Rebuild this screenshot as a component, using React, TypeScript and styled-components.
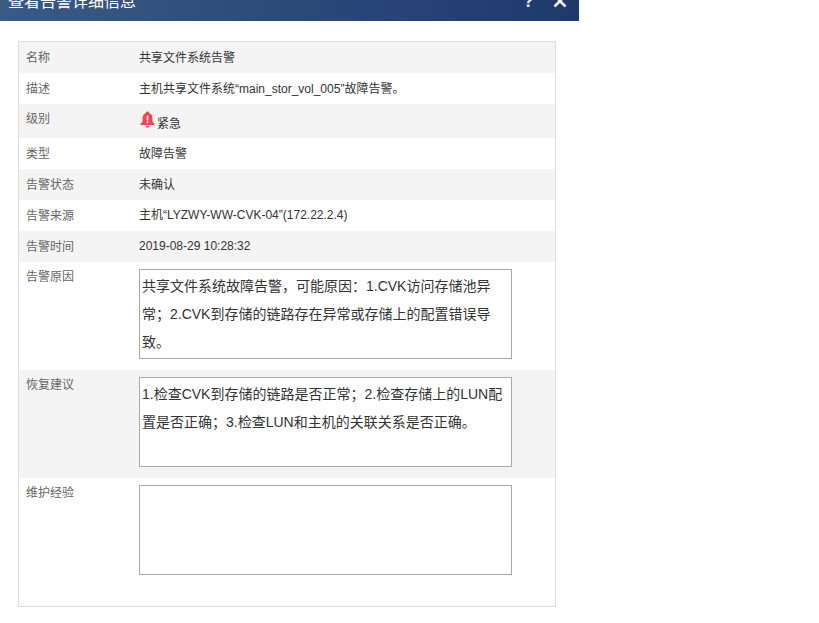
import React from 'react';
import styled, { createGlobalStyle } from 'styled-components';

const GlobalStyle = createGlobalStyle`
  html, body {
    margin: 0;
    padding: 0;
    background: #fff;
    overflow: hidden;
  }
  body {
    font-family: "Liberation Sans", "Noto Sans CJK SC", sans-serif;
    font-size: 12px;
  }
`;

const Dialog = styled.div`
  width: 579px;
  margin-top: -19px;
`;

const TitleBar = styled.header`
  height: 40px;
  display: flex;
  justify-content: space-between;
  align-items: center;
  padding: 0 12px 0 8px;
  box-sizing: border-box;
  background: linear-gradient(to right, #3a5a85, #1e3a6b);
  color: #fff;
`;

const Title = styled.h2`
  margin: 0 0 3px;
  font-size: 16px;
  font-weight: normal;
`;

const TitleTools = styled.div`
  display: flex;
  align-items: center;
  gap: 19px;
`;

const HelpMark = styled.span`
  font-size: 18px;
  font-weight: bold;
  color: #dfe4ec;
`;

const Panel = styled.div`
  margin: 20px 23px 0 18px;
  border: 1px solid #ddd;
  height: 566px;
  box-sizing: border-box;
`;

const Row = styled.div<{ $h: number; $shade?: boolean }>`
  display: flex;
  height: ${(p) => p.$h}px;
  box-sizing: border-box;
  background: ${(p) => (p.$shade ? '#f4f4f4' : '#fff')};
`;

const Label = styled.div<{ $top?: number }>`
  width: 120px;
  padding: ${(p) => p.$top ?? 8}px 0 0 7px;
  box-sizing: border-box;
  line-height: 17px;
  color: #666;
`;

const Value = styled.div<{ $top?: number }>`
  padding-top: ${(p) => p.$top ?? 8}px;
  line-height: 17px;
  color: #333;
`;

const LevelValue = styled(Value)`
  display: flex;
  align-items: flex-start;
  gap: 1px;
`;

const LevelText = styled.span`
  margin-top: 5px;
`;

const TextBox = styled.div`
  width: 373px;
  height: 90px;
  margin-top: 7px;
  padding: 2px 2px;
  box-sizing: border-box;
  border: 1px solid #a9a9a9;
  background: #fff;
  font-size: 14px;
  line-height: 28px;
  color: #333;
`;

const BellIcon = () => (
  <svg width="17" height="17" viewBox="0 0 17 17">
    <path
      fill="#f4444f"
      d="M8.5 0.5c-1 0-1.6.7-1.6 1.5C4.6 2.8 3.6 4.8 3.6 7v3.2L1.5 13v1h14v-1l-2.1-2.8V7c0-2.2-1-4.2-3.3-5 0-.8-.6-1.5-1.6-1.5zM6.5 15c.2 1 1 1.5 2 1.5s1.8-.5 2-1.5z"
    />
    <rect x="7.7" y="4.5" width="1.6" height="5" fill="#fff" />
    <rect x="7.7" y="10.4" width="1.6" height="1.6" fill="#fff" />
  </svg>
);

const CloseIcon = () => (
  <svg width="14" height="14" viewBox="0 0 14 14">
    <path d="M1.5 1.5l11 11M12.5 1.5l-11 11" stroke="#eef1f5" strokeWidth="2.6" fill="none" />
  </svg>
);

const simpleRows = [
  { label: '类型', value: '故障告警', shade: false, top: 8 },
  { label: '告警状态', value: '未确认', shade: true, top: 8 },
  { label: '告警来源', value: '主机“LYZWY-WW-CVK-04”(172.22.2.4)', shade: false, top: 7 },
  { label: '告警时间', value: '2019-08-29 10:28:32', shade: true, top: 7 },
];

const App: React.FC = () => {
  return (
    <>
      <GlobalStyle />
      <Dialog>
        <TitleBar>
          <Title>查看告警详细信息</Title>
          <TitleTools>
            <HelpMark>?</HelpMark>
            <CloseIcon />
          </TitleTools>
        </TitleBar>
        <Panel>
          <Row $h={31} $shade>
            <Label>名称</Label>
            <Value>共享文件系统告警</Value>
          </Row>
          <Row $h={31}>
            <Label>描述</Label>
            <Value>主机共享文件系统“main_stor_vol_005”故障告警。</Value>
          </Row>
          <Row $h={34} $shade>
            <Label $top={7}>级别</Label>
            <LevelValue $top={7}>
              <BellIcon />
              <LevelText>紧急</LevelText>
            </LevelValue>
          </Row>
          {simpleRows.map((r) => (
            <Row key={r.label} $h={31} $shade={r.shade}>
              <Label>{r.label}</Label>
              <Value $top={r.top}>{r.value}</Value>
            </Row>
          ))}
          <Row $h={108}>
            <Label $top={7}>告警原因</Label>
            <TextBox>共享文件系统故障告警，可能原因：1.CVK访问存储池异常；2.CVK到存储的链路存在异常或存储上的配置错误导致。</TextBox>
          </Row>
          <Row $h={108} $shade>
            <Label $top={7}>恢复建议</Label>
            <TextBox>1.检查CVK到存储的链路是否正常；2.检查存储上的LUN配置是否正确；3.检查LUN和主机的关联关系是否正确。</TextBox>
          </Row>
          <Row $h={108}>
            <Label $top={7}>维护经验</Label>
            <TextBox />
          </Row>
        </Panel>
      </Dialog>
    </>
  );
};

export default App;
